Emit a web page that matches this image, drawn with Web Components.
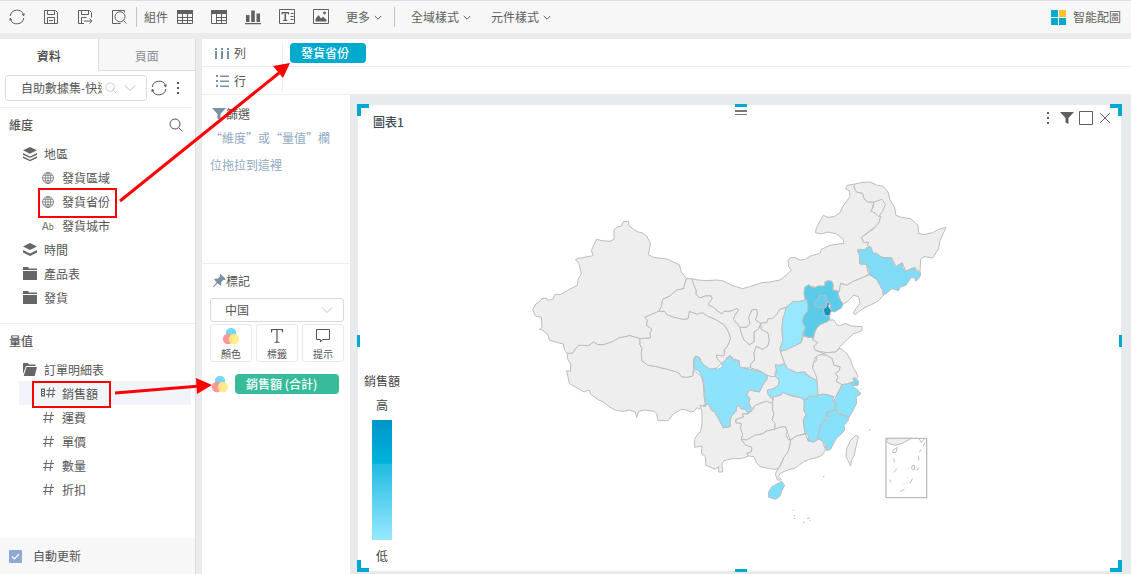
<!DOCTYPE html>
<html lang="zh-Hant">
<head>
<meta charset="utf-8">
<title>圖表1</title>
<style>
  body { margin: 0; font: 12px/18px "Noto Sans CJK TC", "Noto Sans", sans-serif; color: #555; }
</style>
</head>
<body>
<bi-studio></bi-studio>
<script>
const ICONS = {
  refresh: [18, '<path d="M2.2 8A7 7 0 0 1 15.6 6.6M15.8 10A7 7 0 0 1 2.4 11.4" class="l"/><path d="M16.8 5.2l-.7 3-2.6-1.6zM1.2 12.8l.7-3 2.6 1.6z" class="f"/>'],
  save: [18, '<path d="M2.500 2.500h11l2 2v11h-13zM5.500 2.500v4h7v-4M5.500 15.500v-6h7v6M7 12.500h4" class="l"/>'],
  saveas: [18, '<path d="M8 15.500H2.500v-13h11l2 2v5M5.500 2.500v4h7v-4M5.500 15.500v-6h5M8 13h8M13.500 10.500l2.500 2.500-2.500 2.500" class="l"/>'],
  preview: [18, '<path d="M2.500 14.500v-12h12M2.500 12v3.500h8M14.500 2.500v2" class="l"/><circle cx="10" cy="8.800" r="5" class="l"/><path d="M13.500 12.500l3 3" class="l"/>'],
  table: [18, '<path d="M1 2h16v4H1z" class="f"/><path d="M1.500 2.500v13h15v-13M1 9.500h16M1 12.500h16M6.500 5v11M11.500 5v11" class="l"/>'],
  pivot: [18, '<path d="M1 2h16v4H1z" class="f"/><path d="M1.500 2.500v13h15v-13M6 9.500h11M6 12.500h11M6.500 5v11M11.500 5v11" class="l"/>'],
  bars: [18, '<path d="M2 7h3.500v7H2zM7.200 2.500h3.600V14H7.200zM12.500 5.500H16V14h-3.500zM1 15h16v1.200H1z" class="f"/>'],
  text: [18, '<path d="M1.500 1.500h15v14h-15zM12.500 5.500h3M12.500 8.500h3M12.500 11.500h3" class="l"/><path d="M3.500 4h7.500v2.500H10L9.500 5.200H8v6.600h1.200V13H5.300v-1.200h1.200V5.200H5L4.500 6.500h-1z" class="f"/>'],
  image: [18, '<path d="M1.500 1.500h15v14h-15z" class="l"/><path d="M3.500 13.500V11l3-4 2.500 3.500 2-1.800 3.500 3v1.800z" class="f"/><circle cx="12.500" cy="5" r="1.400" class="f"/>'],
  chevron: [8, '<path d="M.8 3l3.200 3.200L7.200 3" class="l"/>'],
  chevwide: [12, '<path d="M1 3.500l5 5 5-5" class="l"/>'],
  logo: [16, '<path d="M0 1h7v7H0zM0 9h7v7H0zM8 9h7v7H8z" fill="#00a9ce"/><path d="M8 1h7v7H8z" fill="#ffc02e"/>'],
  columns: [14, '<path d="M0 5h2v8H0zM6 5h2v8H6zM12 5h2v8h-2zM0 2h2v2H0zM6 2h2v2H6zM12 2h2v2h-2z" fill="#7891a3"/>'],
  rows: [14, '<path d="M5 1.500h9V3H5zM5 6.500h9V8H5zM5 11.500h9V13H5zM1 1h2v2H1zM1 6h2v2H1zM1 11h2v2H1z" fill="#7891a3"/>'],
  dots: [14, '<path d="M6 1h2v2H6zM6 6h2v2H6zM6 11h2v2H6z" class="f"/>'],
  search: [14, '<circle cx="6" cy="6" r="5" class="l"/><path d="M9.600 9.600L13.500 13.500" class="l"/>'],
  layers: [14, '<path d="M7 0l7 3.300-7 3.400-7-3.400z" class="f"/><path d="M0 6l7 3.400L14 6v1.700L7 11 0 7.700zM0 9.300l7 3.400 7-3.400V11l-7 3.200L0 11z" class="f"/>'],
  layers2: [14, '<path d="M7 0l7 3.500-7 3.600-7-3.600z" class="f"/><path d="M0 7l7 3.500L14 7v2.500L7 13 0 9.500z" class="f"/>'],
  folder: [14, '<path d="M0 0h5l1 1.500h8V3H0zM0 4h14v9H0z" class="f"/>'],
  open: [14, '<path d="M0 0h5l1 1.500h6.500V3H3L0 11z" class="f"/><path d="M3.500 4H14l-2.300 9H.7z" class="f"/>'],
  globe: [12, '<circle cx="6" cy="6" r="5.500" class="t"/><ellipse cx="6" cy="6" rx="2.700" ry="5.500" class="t"/><path d="M.5 6h11M6 .5v11M1.500 3.300h9M1.500 8.700h9" class="t"/>'],
  hash: [12, '<path d="M4.500 0L3 11M9.500 0L8 11M1.500 3.500H12M1 7.500h10" class="l"/>'],
  bhash: [14, '<path d="M-1 1.500h4v8h-4z" class="f"/><path d="M0 3.500h2M0 5.500h2M0 7.500h2" stroke="#fff"/><path d="M7.500.5L6.500 10.500M11.500.5l-1 10M4.500 3.500H13.500M4 7.500h9" class="l"/>'],
  funnel: [14, '<path d="M0 1h14L8.500 7v6L5.500 11.500V7z" class="f"/>'],
  pin: [14, '<path d="M8.500 0L14 5.200l-1.500.8-1-.2-2.300 2.400c.3 1.500 0 2.700-.8 3.500L5.700 9.200 1 13.500.5 13l4.200-4.800L2 5.500c.9-.9 2.200-1.100 3.600-.8L8 2.500 7.700 1.200z" class="f"/>'],
  square: [14, '<path d="M.5.5h13v13H.5z" class="l"/>'],
  close: [14, '<path d="M2 2l10 10M12 2L2 12" class="l"/>'],
  colors: [18, '<circle cx="9" cy="6" r="5.200" fill="#77d7f5"/><circle cx="6" cy="12" r="5.200" fill="#ff8f92" fill-opacity=".92"/><circle cx="12" cy="12" r="5.200" fill="#ffec80" fill-opacity=".9"/>'],
  label: [18, '<path d="M3 2h12v3.500h-.8L13.500 3H9.600v11.500l2 .5v.8H6.400V15l2-.5V3H4.500l-.7 2.500H3z" class="f"/>'],
  tip: [18, '<path d="M2.500 2.500h13v10H8.500L6.500 15v-2.500h-4z" class="l"/>']
};
customElements.define('ui-icon', class extends HTMLElement {
  connectedCallback() {
    const [s, d] = ICONS[this.getAttribute('name')];
    this.attachShadow({ mode: 'open' }).innerHTML =
      `<style>:host{display:block;flex:none}svg{display:block;overflow:visible}.l{fill:none;stroke:currentColor;stroke-width:1}.t{fill:none;stroke:currentColor;stroke-width:.7}.f{fill:currentColor}</style>
       <svg width="${s}" height="${s}" viewBox="0 0 ${s} ${s}" aria-hidden="true">${d}</svg>`;
  }
});
function define(name, html) {
  const t = document.createElement('template');
  t.innerHTML = html;
  customElements.define(name, class extends HTMLElement {
    constructor() {
      super();
      this.attachShadow({ mode: 'open' }).append(t.content.cloneNode(true));
    }
  });
}
const BTN = 'button{font:inherit;color:inherit;background:none;border:0;padding:0;margin:0;cursor:pointer;display:flex;align-items:center}';

define('tool-bar', `<style>
  :host{display:flex;align-items:center;height:32px;padding:0 10px 0 8px;background:#f7f7f7;border-top:1px solid #dedeea;border-bottom:6px solid #ebebeb;color:#606060}
  ${BTN}
  .icons{display:flex;gap:16px}
  hr{width:1px;height:20px;margin:0 7px 0 8px;border:0;background:#c4c4c4}
  .menu{gap:4px}
  .menu+.menu{margin-left:20px}
  .styles{display:flex;margin-left:9px}
  .smart{margin-left:auto;gap:6px}
</style>
<div class="icons">
  <button aria-label="重新整理"><ui-icon name="refresh"></ui-icon></button>
  <button aria-label="儲存"><ui-icon name="save"></ui-icon></button>
  <button aria-label="另存"><ui-icon name="saveas"></ui-icon></button>
  <button aria-label="預覽"><ui-icon name="preview"></ui-icon></button>
</div>
<hr>
<div class="icons" style="gap:8px;align-items:center"><span>組件</span>
 <div class="icons">
  <button aria-label="表格"><ui-icon name="table"></ui-icon></button>
  <button aria-label="交叉表"><ui-icon name="pivot"></ui-icon></button>
  <button aria-label="圖表"><ui-icon name="bars"></ui-icon></button>
  <button aria-label="文字"><ui-icon name="text"></ui-icon></button>
  <button aria-label="圖片"><ui-icon name="image"></ui-icon></button>
  <button class="menu">更多<ui-icon name="chevron"></ui-icon></button>
 </div>
</div>
<hr style="margin-left:12px">
<div class="styles">
  <button class="menu">全域樣式<ui-icon name="chevron"></ui-icon></button>
  <button class="menu">元件樣式<ui-icon name="chevron"></ui-icon></button>
</div>
<button class="smart"><ui-icon name="logo"></ui-icon>智能配圖</button>`);

define('tree-item', `<style>
  :host{display:flex;align-items:center;height:22px;padding-top:2px;margin:0 4px 0 19px;padding-left:4px;gap:7px;color:#666}
  :host([level="2"]){padding-left:23px;gap:8px}
  :host([selected]){background:#f1f5f9}
  span{color:#555}
  slot[name=icon]{display:block}
</style><slot name="icon"></slot><span><slot></slot></span>`);

define('data-sidebar', `<style>
  :host{display:flex;flex-direction:column;width:196px;background:#fff;border-right:1px solid #ddd;box-sizing:border-box}
  ${BTN}
  .tabs{display:grid;grid-template-columns:1fr 1fr;height:32px}
  .tabs button{justify-content:center;padding-top:2px}
  .tabs .on{font-weight:500;color:#444}
  .tabs .off{background:#f7f7f7;color:#8a8e96;border:solid #ddd;border-width:0 0 1px 1px}
  .src{display:flex;align-items:center;gap:3px;padding:4px 0 6px 5px;border-bottom:1px solid #eee;margin-right:4px}
  .pick{position:relative;flex:none;width:142px}
  select{appearance:none;width:100%;height:26px;box-sizing:border-box;border:1px solid #d7dae2;border-radius:3px;background:#fff;font:inherit;color:#555;padding:0 44px 0 15px;text-overflow:clip}
  .pick div{position:absolute;right:11px;top:7px;display:flex;gap:7px;color:#c0c4cc;pointer-events:none}
  h2{display:flex;justify-content:space-between;align-items:center;margin:0 12px 0 9px;height:33px;font-size:12px;font-weight:500;color:#555}
  .ab{display:block;width:12px;font-size:11px;line-height:16px}
  .ab small{font-size:8px}
  section+section{border-top:1px solid #eee;margin-top:14px}
  label{display:flex;align-items:center;gap:11px;height:36px;padding-left:9px;background:#f7f7f7;margin-top:auto}
  input{appearance:none;width:13px;height:13px;margin:0;border-radius:1px;background:#8fa9d4 url("data:image/svg+xml,%3Csvg xmlns='http://www.w3.org/2000/svg' viewBox='0 0 13 13'%3E%3Cpath d='M3 6.500l2.500 2.500 4.500-5' fill='none' stroke='white' stroke-width='1.200'/%3E%3C/svg%3E")}
</style>
<nav class="tabs"><button class="on">資料</button><button class="off">頁面</button></nav>
<div class="src">
  <div class="pick"><select aria-label="數據集"><option>自助數據集-快速</option></select>
  <div><ui-icon name="search" style="zoom:.85"></ui-icon><ui-icon name="chevwide"></ui-icon></div></div>
  <button aria-label="重新整理"><ui-icon name="refresh"></ui-icon></button>
  <button aria-label="更多"><ui-icon name="dots"></ui-icon></button>
</div>
<section>
  <h2>維度<button aria-label="搜尋"><ui-icon name="search"></ui-icon></button></h2>
  <tree-item><ui-icon slot="icon" name="layers"></ui-icon>地區</tree-item>
  <tree-item level="2"><ui-icon slot="icon" name="globe"></ui-icon>發貨區域</tree-item>
  <tree-item level="2"><ui-icon slot="icon" name="globe"></ui-icon>發貨省份</tree-item>
  <tree-item level="2"><span slot="icon" class="ab">A<small>b</small></span>發貨城市</tree-item>
  <tree-item><ui-icon slot="icon" name="layers2"></ui-icon>時間</tree-item>
  <tree-item><ui-icon slot="icon" name="folder"></ui-icon>產品表</tree-item>
  <tree-item><ui-icon slot="icon" name="folder"></ui-icon>發貨</tree-item>
</section>
<section>
  <h2>量值</h2>
  <tree-item><ui-icon slot="icon" name="open"></ui-icon>訂單明細表</tree-item>
  <tree-item level="2" selected><ui-icon slot="icon" name="bhash" style="width:12px"></ui-icon>銷售額</tree-item>
  <tree-item level="2"><ui-icon slot="icon" name="hash"></ui-icon>運費</tree-item>
  <tree-item level="2"><ui-icon slot="icon" name="hash"></ui-icon>單價</tree-item>
  <tree-item level="2"><ui-icon slot="icon" name="hash"></ui-icon>數量</tree-item>
  <tree-item level="2"><ui-icon slot="icon" name="hash"></ui-icon>折扣</tree-item>
</section>
<label><input type="checkbox" checked>自動更新</label>`);

define('field-pill', `<style>
  :host{display:block;box-sizing:border-box;height:20px;line-height:20px;padding:0 11px;border-radius:4px;background:var(--pill,#00a9ce);color:#fff;font-weight:500}
</style><slot></slot>`);

define('drop-shelf', `<style>
  :host{display:flex;align-items:center;height:27px;border-bottom:1px solid #eee;background:#fff;padding-left:13px}
  .name{display:flex;align-items:center;gap:5px;width:67px;height:22px;border-right:1px solid #eee;margin-right:7px}
</style><div class="name"><slot name="icon"></slot><slot name="name"></slot></div><slot></slot>`);

define('mark-button', `<style>
  :host{display:block;flex:1}
  button{width:100%;height:38px;box-sizing:border-box;border:1px solid #e8e8ec;border-radius:3px;background:#fff;padding:2px 0 0;font:inherit;font-size:10px;line-height:17px;color:#555;display:flex;flex-direction:column;align-items:center}
</style><button><slot name="icon"></slot><slot></slot></button>`);

define('config-column', `<style>
  :host{display:flex;flex-direction:column;width:148px;background:#fff}
  .filter{box-sizing:border-box;height:169px;padding:10px 8px;border-bottom:1px solid #eee}
  h3{display:flex;align-items:center;margin:0;font-size:12px;font-weight:400;color:#555;padding-left:2px}
  h3 ui-icon{color:#7891a3}
  p{margin:1px 0 0;line-height:27px;color:#90a9c3;padding-right:8px}
  .mark{padding:8px 6px 8px 8px}
  .type{position:relative;margin:8px 0 2px}
  select{appearance:none;width:100%;height:24px;border:1px solid #d7dae2;border-radius:3px;background:#fff;font:inherit;color:#555;padding:0 14px}
  .type ui-icon{position:absolute;right:11px;top:6px;color:#c0c4cc;pointer-events:none}
  .btns{display:flex;gap:4px}
  .field{display:flex;align-items:center;gap:6px;margin-top:12px;padding-left:1px}
  .field field-pill{--pill:#38bb9b;width:104px}
</style>
<div class="filter"><h3><ui-icon name="funnel"></ui-icon>篩選</h3><p>“維度”或“量值”欄位拖拉到這裡</p></div>
<div class="mark"><h3><ui-icon name="pin"></ui-icon>標記</h3>
<div class="type"><select aria-label="地圖"><option>中国</option></select><ui-icon name="chevwide"></ui-icon></div>
<div class="btns">
  <mark-button><ui-icon slot="icon" name="colors"></ui-icon>顏色</mark-button>
  <mark-button><ui-icon slot="icon" name="label"></ui-icon>標籤</mark-button>
  <mark-button><ui-icon slot="icon" name="tip"></ui-icon>提示</mark-button>
</div>
<div class="field"><ui-icon name="colors"></ui-icon><field-pill>銷售額 (合計)</field-pill></div></div>`);

define('color-legend', `<style>
  :host{display:flex;flex-direction:column;align-items:center;width:36px;color:#444}
  i{width:20px;height:120px;margin:6px 0 7px;background:linear-gradient(#0095c8,#00b4dc 36%,#22bce2 37%,#97e8ff)}
  .title{margin-bottom:6px}
</style><span class="title">銷售額</span><span>高</span><i></i><span>低</span>`);

define('china-map', `<style>
  :host{display:block}
  svg{display:block}
  path{fill:#eee;stroke:#bdbdbd;stroke-width:3;stroke-linejoin:round}
  .n{fill:none}
  .frame{fill:none;stroke-width:4}
  .dots{fill:none;stroke-width:4}
</style>
<svg width="440" height="360" viewBox="520 173 440 360" role="img" aria-label="中国">
<g transform="translate(520 210) scale(.33333)">
 <path d="M38 298L48 282 62 272 66 266 80 264 82 271 98 268 105 253 120 254 132 248 148 238 172 226 174 208 184 192 180 174 176 158 166 149 176 145 214 138 220 136 214 122 222 104 230 88 246 92 270 94 282 88 282 60 290 52 304 48 310 35 326 34 326 46 340 58 354 66 366 68 380 78 391 100 389 114 385 134 400 142 440 147 478 164 484 186 499 206 493 226 492 236 470 240 450 258 428 268 424 290 416 304 374 322 382 330 380 346 396 358 390 368 392 384 360 386 330 377 296 384 280 394 252 404 234 404 220 396 206 407 176 406 164 420 158 430 142 430 134 422 130 402 106 396 88 390 84 374 66 360 58 358 66 352 64 322 46 318Z"/>
 <path d="M142 430L158 430 164 420 176 406 206 407 220 396 234 404 252 404 280 394 296 384 330 377 360 386 360 404 366 414 364 430 366 452 382 465 410 470 450 480 476 488 484 500 500 502 518 498 522 480 544 500 550 520 552 560 556 580 548 590 536 598 532 592 522 604 512 606 500 600 484 598 460 612 444 632 414 632 410 612 402 604 374 600 356 604 350 622 346 606 328 600 314 604 290 602 270 592 250 576 236 570 214 554 206 540 192 546 178 538 148 520 140 482 152 484 152 462 142 446Z"/>
 <path d="M360 386L392 384 390 368 396 358 380 346 382 330 374 322 416 304 434 304 440 314 464 322 490 328 504 326 508 304 530 312 548 308 562 318 586 328 612 344 624 362 632 384 626 402 612 420 614 438 602 440 590 434 592 446 606 458 594 470 584 480 560 474 544 462 540 444 528 438 520 446 520 476 518 498 500 502 484 500 476 488 450 480 410 470 382 465 366 452 364 430 366 414 360 404Z"/>
</g>
<g transform="translate(680 240) scale(.33333)">
 <path d="M19 116L35 116 54 120 80 122 108 120 128 122 156 136 188 146 216 138 246 128 270 126 300 120 318 106 334 90 326 80 324 62 330 54 344 52 360 60 376 58 392 48 420 40 424 28 450 16 492 10 490 -2 470 -18 444 -24 424 -18 406 -22 410 -38 430 -74 444 -68 462 -70 480 -82 488 -100 510 -130 508 -148 496 -154 502 -164 524 -168 522 -158 530 -144 548 -140 552 -124 564 -114 582 -114 576 -90 584 -80 602 -72 598 -54 588 -42 544 -8 552 8 566 6 562 16 572 22 572 26 556 28 532 30 538 44 540 72 558 72 566 102 550 112 520 124 500 136 482 130 478 154 460 152 456 130 444 122 434 126 438 140 406 142 386 136 374 142 374 166 380 180 360 186 340 184 330 196 318 202 300 208 290 224 278 236 264 236 260 248 242 250 226 240 232 222 230 208 216 210 206 232 210 250 200 262 180 262 172 252 160 238 164 226 176 210 170 206 150 214 132 214 126 222 114 214 100 202 84 194 96 176 94 168 76 168 60 174 48 164 48 150 42 136 35 116Z"/>
 <path d="M19 116L35 116 42 136 48 150 48 164 60 174 76 168 94 168 96 176 84 194 100 202 114 214 126 222 132 214 150 214 170 206 176 210 164 226 160 238 172 252 180 262 184 280 192 300 208 314 222 306 222 276 236 266 242 250 244 268 264 278 268 300 264 318 248 328 228 320 222 340 224 360 212 372 210 384 190 384 178 382 178 362 160 356 150 346 138 356 136 372 124 370 112 356 108 346 132 348 134 330 146 312 152 294 144 272 132 254 106 238 82 228 68 218 50 222 28 214 24 236 10 238 -16 232 -40 224 -46 214 -64 214 -56 200 -52 178 -30 168 -10 150 12 146 13 136Z"/>
 <path d="M180 262L200 262 210 250 206 232 216 210 230 208 232 222 226 240 242 250 236 266 222 276 222 306 208 314 192 300 184 280Z"/>
 <path d="M318 202L316 220 308 236 306 270 308 304 300 330 306 348 314 370 300 376 286 376 290 388 284 400 292 410 270 414 240 392 212 384 212 372 224 360 222 340 228 320 248 328 264 318 268 300 264 278 244 268 242 250 260 248 264 236 278 236 290 224 300 208Z"/>
 <path d="M450 240L462 240 470 254 480 258 496 250 514 258 546 260 546 272 520 282 500 300 480 320 468 336 440 338 408 332 400 320 414 308 396 298 402 284 410 264 420 254Z"/>
 <path d="M302 334L334 322 364 308 370 288 402 294 396 298 414 308 400 320 408 332 430 340 420 350 408 350 400 370 398 384 410 400 412 422 392 412 374 396 350 398 322 386 314 370 306 348Z"/>
 <path d="M422 344L440 338 468 336 480 324 500 340 512 360 518 380 528 396 534 410 524 420 516 430 500 432 486 434 468 424 474 412 466 400 478 392 480 380 462 376 456 356 440 346Z"/>
 <path style="fill:#5bcbea" d="M374 142L386 134 392 140 406 144 412 138 434 138 436 126 446 122 456 124 460 136 458 150 476 154 476 172 490 190 484 204 464 216 454 214 450 190 442 186 440 200 430 208 434 226 448 228 450 238 440 246 420 254 410 264 402 280 402 292 384 292 368 286 376 262 366 244 372 226 382 214 380 196 376 180 372 160Z"/>
 <path style="fill:#66cdee" d="M404 198L404 184 414 180 418 166 436 166 440 180 440 196 420 204Z"/>
 <path style="fill:#0596c7" d="M442 186L448 188 446 200 454 212 448 228 434 226 430 208 440 200Z"/>
 <path style="fill:#97e8ff" d="M318 202L340 184 360 184 380 178 384 200 382 214 372 226 366 244 374 262 368 286 364 306 350 314 334 322 318 330 302 334 300 324 308 304 306 270 308 236 314 220Z"/>
</g>
<g transform="translate(800 170) scale(.33333)">
 <path d="M164 42L184 38 210 36 232 46 248 48 264 66 270 90 284 112 288 136 304 142 332 146 354 166 356 190 372 194 398 188 416 178 438 172 430 190 420 212 416 236 398 264 372 260 362 268 360 306 344 292 330 298 318 304 306 278 288 290 276 264 246 262 218 250 212 232 202 226 206 216 192 218 184 202 222 176 228 168 238 156 242 138 234 138 216 120 222 96 204 96 192 86 188 70 170 66 162 52Z"/>
 <path d="M222 96L246 88 256 102 248 124 236 140 224 128 212 124 220 112Z"/>
 <path d="M122 340L140 346 160 334 190 322 208 314 230 328 240 346 248 360 250 376 236 392 218 402 192 414 164 434 160 430 168 416 180 400 176 380 160 376 146 392 130 402 122 392 114 370 118 364Z"/>
 <path style="fill:#80dcf6" d="M172 240L196 238 200 232 214 232 218 248 230 250 246 262 274 264 278 278 288 290 306 280 310 296 318 304 344 292 348 302 362 308 360 320 348 334 344 324 334 322 318 346 300 352 296 362 276 356 262 368 250 376 248 360 240 346 230 328 208 314 206 298 198 282 180 282 178 254Z"/>
</g>
<g transform="translate(680 340) scale(.33333)">
 <path d="M422 44L440 46 456 56 462 76 480 80 478 92 466 100 474 112 468 124 486 134 472 160 468 172 450 166 430 162 414 166 408 150 412 132 410 112 398 84 400 70 410 60 410 48Z"/>
 <path d="M262 106L276 110 288 108 298 120 296 134 282 146 264 152 268 168 280 180 276 190 260 184 246 188 226 196 216 206 206 190 210 176 200 164 208 150 238 156 250 132 260 120Z"/>
 <path d="M60 196L76 200 78 194 86 192 94 210 104 216 118 240 130 264 150 260 150 240 156 226 168 214 170 200 180 196 182 206 196 208 204 218 204 222 188 222 190 232 168 238 168 248 184 250 182 266 188 284 184 298 196 314 216 322 214 336 200 340 206 348 184 356 156 356 132 362 126 372 128 396 116 396 116 380 106 388 78 376 76 350 64 340 66 318 44 322 44 298 52 284 62 274 66 250 66 214Z"/>
 <path d="M168 238L190 232 188 222 204 222 216 212 226 196 246 188 260 184 278 190 278 208 282 222 276 240 286 250 284 268 262 272 246 282 224 286 200 300 184 298 188 284 182 266 184 250 168 248Z"/>
 <path d="M280 170L300 166 310 158 336 168 360 172 372 180 374 192 372 212 378 224 370 240 372 262 376 280 350 288 330 300 322 276 316 260 300 262 284 268 286 250 276 240 282 222 278 208 278 190Z"/>
 <path d="M184 298L200 300 224 286 246 282 262 272 284 268 300 262 316 260 322 276 318 284 326 300 332 300 330 316 324 336 312 352 304 368 298 382 288 388 268 386 240 380 228 366 222 350 206 348 200 340 214 336 216 322 196 314Z"/>
 <path d="M332 300L350 288 376 282 384 302 400 306 416 296 428 304 436 330 426 346 408 354 386 358 370 366 356 376 346 384 330 388 314 394 300 400 296 410 304 420 292 420 286 402 292 390 304 372 312 352 324 336 330 316Z"/>
 <path d="M528 286L536 290 530 312 522 348 514 362 512 378 498 350 500 326 512 300Z"/>
 <path style="fill:#8de3fc" d="M42 66L46 48 56 52 64 66 76 78 92 88 108 84 112 88 126 82 126 68 140 58 150 46 158 58 176 64 180 82 212 88 240 94 262 106 260 120 250 132 238 156 208 150 200 164 210 176 206 190 216 212 204 218 196 208 182 206 180 196 170 200 168 214 156 226 150 240 150 260 130 264 118 240 104 216 94 210 86 192 78 194 74 200 76 190 74 160 72 130 66 110 56 94 42 86Z"/>
 <path style="fill:#97e8ff" d="M286 74L300 76 314 72 322 86 350 98 374 96 382 108 404 118 412 132 414 160 404 170 390 168 372 180 360 172 336 168 310 158 300 166 280 170 280 178 264 164 262 150 282 146 296 134 298 120 284 108 290 96Z"/>
 <path style="fill:#8ae2fb" d="M372 182L390 168 404 170 414 166 430 162 450 166 460 172 458 184 468 190 464 206 452 214 440 216 438 236 428 244 420 264 416 280 412 300 400 306 384 302 384 284 376 280 372 262 370 240 378 224 372 212Z"/>
 <path style="fill:#86e0fa" d="M428 244L442 238 440 218 454 214 464 206 474 222 490 226 508 230 504 242 492 256 494 270 482 284 468 296 460 312 452 328 440 332 434 310 424 300 412 296 416 280 420 264Z"/>
 <path style="fill:#8ae2fb" d="M486 134L500 132 512 128 520 140 536 152 540 164 528 170 530 190 520 210 508 230 490 226 476 220 466 206 468 190 460 184 470 168 480 150Z"/>
 <path style="fill:#78d8f5" d="M518 116L524 112 536 124 534 136 520 138 512 128 524 124Z"/>
 <path style="fill:#7fdff9" d="M266 456L276 440 294 430 304 424 314 436 304 456 300 468 288 478 266 472Z"/>
 <path class="dots" d="M568 272l2-4M430 411l3-2M338 511h3M341 528h3M344 534v3M370 549l3-3M382 535h4M388 532v3M389 542h3M541 148h3M540 159h3"/>
</g>
<g transform="translate(780 420) scale(.33333)">
 <path class="frame" d="M318 55H440V233H318Z"/>
 <path d="M318 62L326 55H394Q366 74 344 76 324 72 318 62Z"/>
 <path class="n" d="M340 90L352 82 348 97 338 98ZM341 116L343 127M341 157L351 146M329 179L333 187M361 214L373 208M390 190L398 175M410 152L417 142M416 109V121M418 97L423 88M430 79L435 67M418 57L424 67 434 56M396 138L404 136 402 150 395 147ZM384 145h2M382 173h2M371 191h2"/>
</g>
</svg>`);

define('chart-card', `<style>
  :host{display:flex;flex-direction:column;position:relative;background:#fff;flex:1}
  ${BTN}
  header{display:flex;justify-content:space-between;height:30px;padding:0 9px 0 15px}
  h1{margin:8px 0 0;font-size:12px;line-height:18px;font-weight:500;color:#3d4a55}
  .tools{display:flex;gap:5px;height:26px;align-items:center;color:#606060}
  .body{flex:1;display:grid;grid-template-columns:1fr auto 1fr;align-items:center}
  color-legend{align-self:end;margin:0 0 6px 6px}
  b{position:absolute;box-sizing:border-box;width:12px;height:12px;border:0 solid #00a9d2}
  .tl{left:-1px;top:-1px;border-width:4px 0 0 4px}
  .tr{right:-1px;top:-1px;border-width:4px 4px 0 0}
  .bl{left:-1px;bottom:-1px;border-width:0 0 4px 4px}
  .br{right:-1px;bottom:-1px;border-width:0 4px 4px 0}
  .t,.b{left:calc(50% - 5px)}
  .t{top:-1px;border-top-width:3px}.b{bottom:-1px;border-bottom-width:3px}
  .l,.r{top:calc(50% - 3px)}
  .l{left:-1px;border-left-width:3px}.r{right:-1px;border-right-width:3px}
  .grip{top:5px;left:calc(50% - 5px);height:5px;border:solid #777;border-width:2px 0 1px}
</style>
<header><h1>圖表1</h1><div class="tools">
  <button aria-label="更多"><ui-icon name="dots"></ui-icon></button>
  <button aria-label="篩選"><ui-icon name="funnel"></ui-icon></button>
  <button aria-label="最大化"><ui-icon name="square"></ui-icon></button>
  <button aria-label="關閉"><ui-icon name="close"></ui-icon></button></div></header>
<div class="body"><color-legend></color-legend><china-map></china-map></div>
<b class="tl"></b><b class="tr"></b><b class="bl"></b><b class="br"></b><b class="t"></b><b class="b"></b><b class="l"></b><b class="r"></b><b class="grip"></b>`);

define('guide-marks', `<style>
  :host{position:absolute;inset:0;pointer-events:none;overflow:hidden}
  svg{display:block}
  rect{fill:none;stroke:red;stroke-width:2}
  line{stroke:red;stroke-width:3}
  polygon{fill:red}
</style><svg width="420" height="420" aria-hidden="true">
<rect x="39" y="189" width="77" height="28"/><rect x="33" y="382" width="77" height="25"/>
<line x1="120" y1="201" x2="279" y2="73"/><polygon points="290,63 283,78 273,66"/>
<line x1="115" y1="393" x2="200" y2="386"/><polygon points="212,385 197,394 196,378"/></svg>`);

define('bi-studio', `<style>
  :host{display:flex;flex-direction:column;position:relative;min-height:100vh;background:#ebebeb}
  .work{display:flex;flex:1;gap:6px}
  main{flex:1;display:flex;flex-direction:column;min-width:0}
  .split{flex:1;display:flex}
  .canvas{flex:1;display:flex;padding:10px 10px 3px 8px;background:#e7ebee}
</style>
<tool-bar></tool-bar>
<div class="work"><data-sidebar></data-sidebar>
<main>
  <drop-shelf><ui-icon slot="icon" name="columns"></ui-icon><span slot="name">列</span><field-pill style="width:76px">發貨省份</field-pill></drop-shelf>
  <drop-shelf><ui-icon slot="icon" name="rows"></ui-icon><span slot="name">行</span></drop-shelf>
  <div class="split"><config-column></config-column><div class="canvas"><chart-card></chart-card></div></div>
</main></div>
<guide-marks></guide-marks>`);
</script>
</body>
</html>
